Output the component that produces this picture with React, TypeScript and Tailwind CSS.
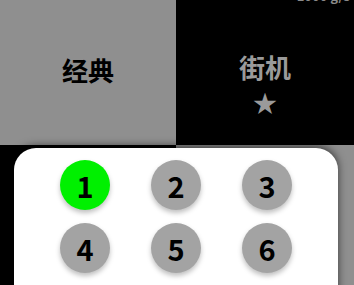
import React from 'react';

const keys = ['1', '2', '3', '4', '5', '6'];

export default function App() {
  const font = { fontFamily: '"Noto Sans CJK SC", "Noto Sans", sans-serif' };

  return (
    <div className="relative w-[354px] h-[285px] overflow-hidden bg-black" style={font}>
      {/* Mode cells */}
      <div className="grid h-full grid-cols-[176px_1fr] grid-rows-[145px_1fr]">
        <div className="flex items-center justify-center bg-[#8f8f8f] pb-[6px]">
          <span className="text-[26px] font-bold leading-none text-black">经典</span>
        </div>
        <div className="flex flex-col items-center bg-black">
          <div className="-mt-[11px] self-end pr-[4px] text-[13px] font-bold leading-none text-[#8a8a8a]">
            1000 g/s
          </div>
          <span className="mt-[52px] text-[26px] font-bold leading-none text-[#9a9a9a]">街机</span>
          <span className="mt-[10px] text-[24px] leading-none text-[#9a9a9a]">★</span>
        </div>
        <div className="bg-black" />
        <div className="bg-[#8f8f8f]" />
      </div>

      {/* Level picker sheet */}
      <div className="absolute left-[14px] top-[148px] h-[170px] w-[324px] rounded-[22px] bg-white shadow-[0_-2px_8px_rgba(0,0,0,0.6)]">
        <div className="grid grid-cols-[50px_50px_50px] gap-x-[41px] gap-y-[13px] px-[46px] pt-[12px]">
          {keys.map((k) => (
            <div
              key={k}
              className={`flex h-[50px] w-[50px] items-center justify-center rounded-full shadow-[0_3px_5px_rgba(0,0,0,0.25)] ${
                k === '1' ? 'bg-[#00f000]' : 'bg-[#a3a3a3]'
              }`}
            >
              <span className="text-[29px] font-bold leading-none text-black">{k}</span>
            </div>
          ))}
        </div>
      </div>
    </div>
  );
}
